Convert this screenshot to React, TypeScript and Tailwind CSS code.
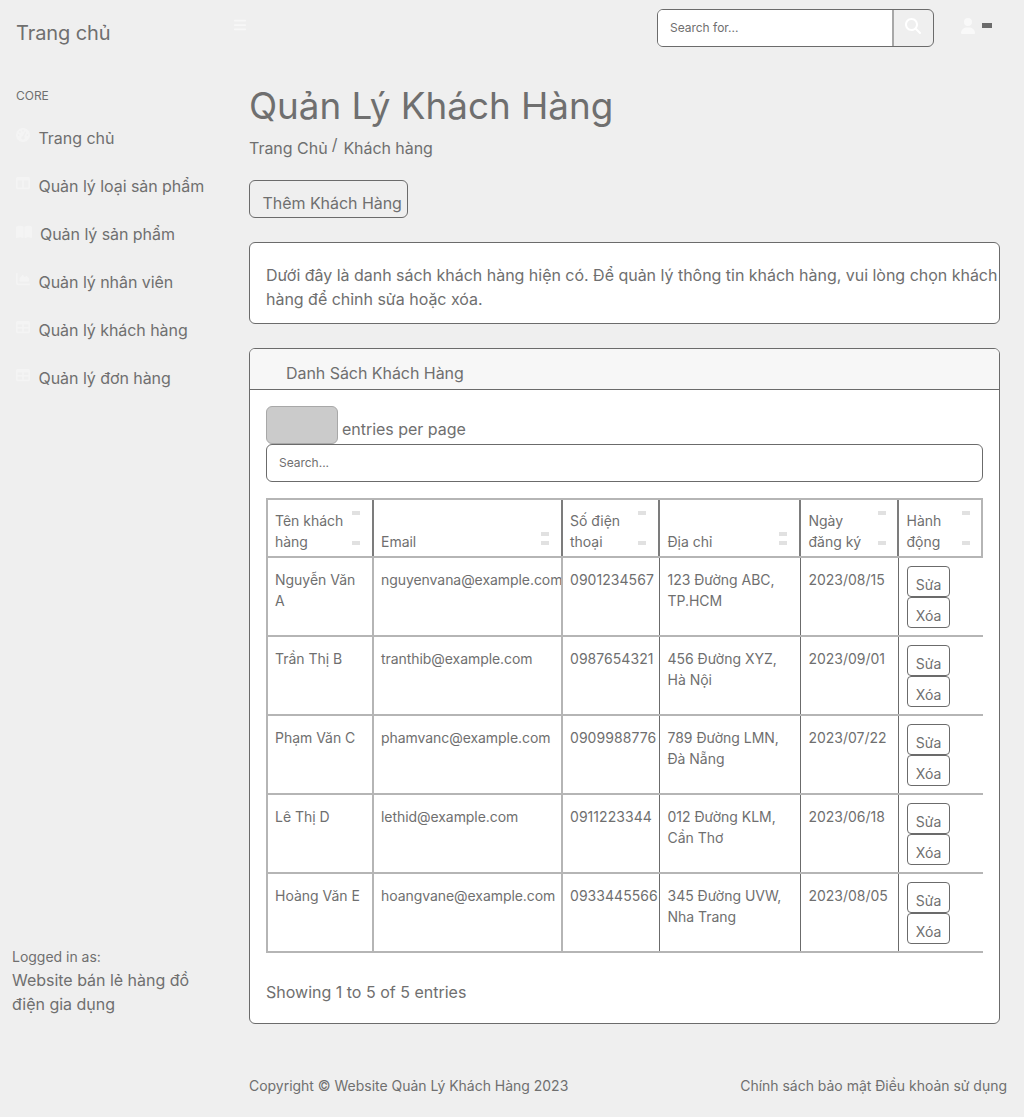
import type { ReactNode } from "react";
import { FaBars, FaMagnifyingGlass, FaUser, FaGaugeHigh, FaTableColumns, FaBookOpen, FaChartArea, FaTable } from "react-icons/fa6";

const nav: { label: string; icon: ReactNode; pad: string }[] = [
  { label: "Trang chủ", icon: <FaGaugeHigh size={14} />, pad: "pl-[8.5px]" },
  { label: "Quản lý loại sản phẩm", icon: <FaTableColumns size={14} />, pad: "pl-[8.5px]" },
  { label: "Quản lý sản phẩm", icon: <FaBookOpen size={16} />, pad: "pl-2" },
  { label: "Quản lý nhân viên", icon: <FaChartArea size={14} />, pad: "pl-[8.5px]" },
  { label: "Quản lý khách hàng", icon: <FaTable size={14} />, pad: "pl-[8.5px]" },
  { label: "Quản lý đơn hàng", icon: <FaTable size={14} />, pad: "pl-[8.5px]" },
];

const heads = [
  ["Tên khách", "hàng"],
  ["Email"],
  ["Số điện", "thoại"],
  ["Địa chỉ"],
  ["Ngày", "đăng ký"],
  ["Hành", "động"],
];

const rows = [
  [["Nguyễn Văn", "A"], ["nguyenvana@example.com"], ["0901234567"], ["123 Đường ABC,", "TP.HCM"], ["2023/08/15"]],
  [["Trần Thị B"], ["tranthib@example.com"], ["0987654321"], ["456 Đường XYZ,", "Hà Nội"], ["2023/09/01"]],
  [["Phạm Văn C"], ["phamvanc@example.com"], ["0909988776"], ["789 Đường LMN,", "Đà Nẵng"], ["2023/07/22"]],
  [["Lê Thị D"], ["lethid@example.com"], ["0911223344"], ["012 Đường KLM,", "Cần Thơ"], ["2023/06/18"]],
  [["Hoàng Văn E"], ["hoangvane@example.com"], ["0933445566"], ["345 Đường UVW,", "Nha Trang"], ["2023/08/05"]],
];

const columns = "grid grid-cols-[106px_189px_97px_141px_98px_86px]";

const headEdge = [
  "border-l-2 border-[#b5b5b5] pl-[7px] pr-3",
  "border-l-2 border-[#7c7c7c] pl-[7px] pr-3",
  "border-l-2 border-[#7c7c7c] pl-[7px] pr-3",
  "border-l-2 border-[#7c7c7c] pl-[7.5px] pr-3",
  "border-l-2 border-[#7c7c7c] pl-[7.5px] pr-[11px]",
  "border-x-2 border-l-[#7c7c7c] border-r-[#b5b5b5] pl-[7.5px] pr-[11px]",
];

const cellEdge = [
  "border-l-2 border-[#b5b5b5] pl-[7px]",
  "border-l-2 border-[#b5b5b5] pl-[7px]",
  "border-l-2 border-[#b5b5b5] pl-[7px]",
  "ml-px border-l border-[#6b6b6b] pl-[7.5px]",
  "ml-px border-l border-[#6b6b6b] pl-[7.5px]",
];

function Lines({ text }: { text: string[] }) {
  return (
    <>
      {text.map((t) => (
        <div key={t} className="whitespace-nowrap">{t}</div>
      ))}
    </>
  );
}

function ActionButton({ children }: { children: ReactNode }) {
  return (
    <button className="block h-[31px] w-[43px] rounded-[4px] border border-[#6b6b6b] pt-[6px] text-center leading-[21px]">
      {children}
    </button>
  );
}

export default function App() {
  return (
    <div className="flex h-[1117px] w-[1024px] flex-col overflow-hidden bg-[#efefef] font-['Inter',sans-serif] text-[16px] leading-6 tracking-[-0.02px] text-[#6f6f6f]">
      <header className="flex h-14 shrink-0 items-start">
        <div className="w-[233px] pt-[18px] pl-4 text-[20px] leading-[30px] tracking-[-0.08px]">Trang chủ</div>
        <FaBars size={14} className="mt-[18px] text-[#f7f7f7]" />
        <form className="mt-[9px] ml-[410px] flex h-[38px] w-[277px] overflow-hidden rounded-[6px] border border-[#6b6b6b]">
          <div className="w-[234px] bg-white pl-3 text-[12px] leading-[36px]">Search for...</div>
          <div className="flex flex-1 justify-center border-l-2 border-[#a8a8a8] pt-2 pr-[2px] text-white">
            <FaMagnifyingGlass size={16} />
          </div>
        </form>
        <FaUser size={16} className="mt-[18px] ml-[26px] text-[#f9f9f9]" />
        <div className="mt-[23px] ml-[6px] h-[5px] w-[10px] bg-[#6b6b6b]" />
      </header>

      <div className="flex min-h-0 flex-1">
        <aside className="flex w-[225px] shrink-0 flex-col">
          <div className="mt-[31px] pl-4 text-[12px] leading-[18px]">CORE</div>
          <nav className="mt-[9px] pl-4 tracking-[-0.05px]">
            {nav.map((n) => (
              <div key={n.label} className="flex h-12 items-start whitespace-nowrap">
                <span className="mt-[14px] text-[#f4f4f4]">{n.icon}</span>
                <span className={`mt-[12px] ${n.pad}`}>{n.label}</span>
              </div>
            ))}
          </nav>
          <div className="mt-auto mb-[101px] pl-3">
            <div className="mb-px text-[14px] leading-[21px]">Logged in as:</div>
            <div className="w-[200px]">Website bán lẻ hàng đồ điện gia dụng</div>
          </div>
        </aside>

        <main className="flex flex-1 flex-col pl-6">
          <h1 className="mt-[26px] text-[36.8px] leading-[48px]">Quản Lý Khách Hàng</h1>
          <div className="flex h-6 pt-[6px]">
            <span>Trang Chủ</span>
            <span className="-mt-1 ml-1">/</span>
            <span className="ml-[6px] tracking-[-0.05px]">Khách hàng</span>
          </div>
          <button className="mt-[26px] h-[38px] w-[159px] shrink-0 rounded-[6px] border border-[#6b6b6b] pt-[10px] pb-0.5 pl-[12.5px] text-left tracking-[-0.05px] whitespace-nowrap">
            Thêm Khách Hàng
          </button>
          <section className="mt-6 h-[82px] w-[751px] shrink-0 rounded-[6px] border border-[#6b6b6b] bg-white pt-5 pl-4">
            <Lines text={["Dưới đây là danh sách khách hàng hiện có. Để quản lý thông tin khách hàng, vui lòng chọn khách", "hàng để chỉnh sửa hoặc xóa."]} />
          </section>

          <section className="mt-6 h-[676px] w-[751px] shrink-0 overflow-hidden rounded-[6px] border border-[#6b6b6b] bg-white">
            <div className="h-[41px] border-b border-[#6b6b6b] bg-[#f7f7f7] pt-3 pl-9 tracking-[-0.05px]">Danh Sách Khách Hàng</div>
            <div className="px-4 pt-4">
              <div className="flex h-[38px]">
                <div className="w-[72px] rounded-[6px] border border-[#a8a8a8] bg-[#cbcbcb]" />
                <span className="pt-[11px] pl-1">entries per page</span>
              </div>
              <div className="h-[38px] w-[717px] rounded-[6px] border border-[#6b6b6b] pl-3 text-[12px] leading-[36px]">Search...</div>

              <div className="mt-4 w-[717px] text-[14px] leading-[21px]">
                <div className={`${columns} h-[60px] border-y-2 border-[#b5b5b5]`}>
                  {heads.map((h, i) => (
                    <div key={i} className={`flex items-end justify-between pb-1 ${headEdge[i]}`}>
                      <div><Lines text={h} /></div>
                      <div className={`mb-[7px] flex flex-col justify-between ${h.length > 1 ? "h-[34px]" : "h-[13px]"}`}>
                        <div className="h-1 w-2 bg-[#e1e1e1]" />
                        <div className="h-1 w-2 bg-[#e1e1e1]" />
                      </div>
                    </div>
                  ))}
                </div>
                {rows.map((r) => (
                  <div key={r[0][0]} className={`${columns} h-[79px] border-b-2 border-[#b5b5b5]`}>
                    {r.map((c, i) => (
                      <div key={i} className={`pt-[11px] ${cellEdge[i]} ${i === 1 ? "tracking-[-0.06px]" : i === 2 ? "tracking-[0.05px]" : ""}`}>
                        <Lines text={c} />
                      </div>
                    ))}
                    <div className="ml-px border-l border-[#6b6b6b] pt-2 pl-2">
                      <ActionButton>Sửa</ActionButton>
                      <ActionButton>Xóa</ActionButton>
                    </div>
                  </div>
                ))}
              </div>
              <div className="mt-[27px] tracking-normal">Showing 1 to 5 of 5 entries</div>
            </div>
          </section>

          <footer className="mt-[51px] flex w-[758px] justify-between text-[14px] leading-[21px]">
            <span>Copyright © Website Quản Lý Khách Hàng 2023</span>
            <span>Chính sách bảo mật Điều khoản sử dụng</span>
          </footer>
        </main>
      </div>
    </div>
  );
}
